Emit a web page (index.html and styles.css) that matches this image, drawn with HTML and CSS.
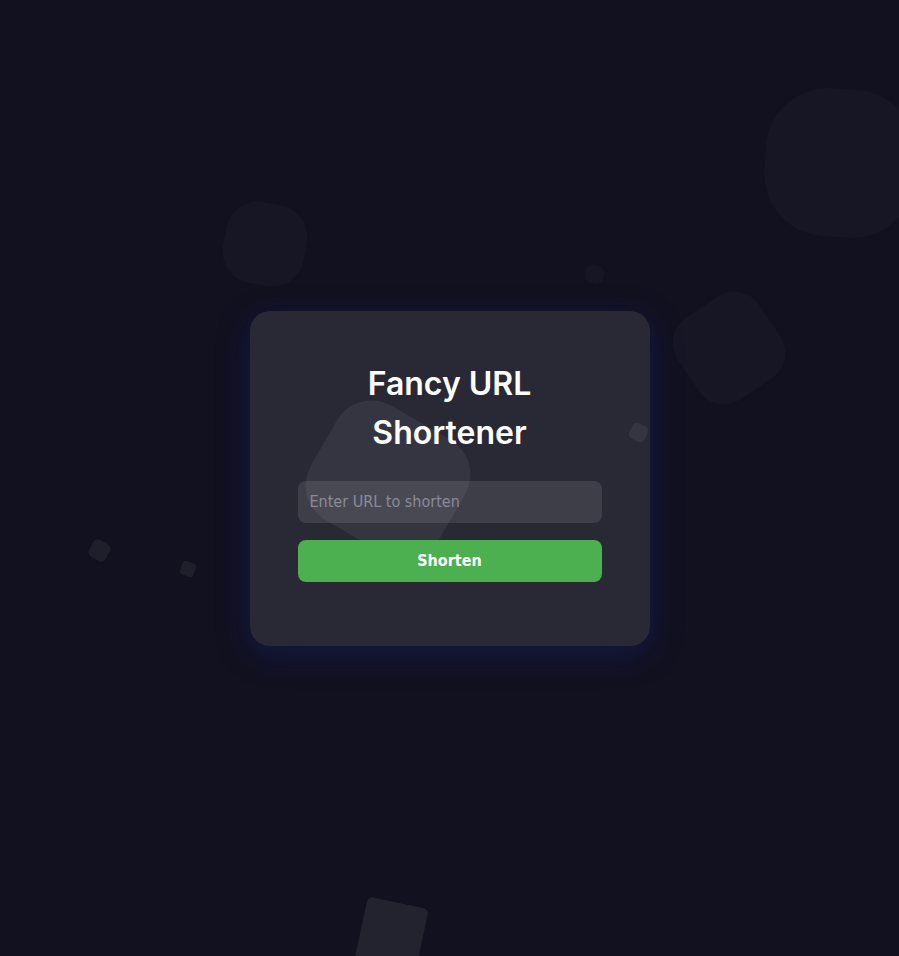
FILE: index.html
```html
<!DOCTYPE html>
<html lang="en">
<head>
<meta charset="utf-8">
<title>Fancy URL Shortener</title>
<link rel="stylesheet" href="styles.css">
</head>
<body>
<div class="shapes">
  <span class="shape s1"></span>
  <span class="shape s2"></span>
  <span class="shape s3"></span>
  <span class="shape s4"></span>
  <span class="shape s5"></span>
  <span class="shape s6"></span>
  <span class="shape s7"></span>
  <span class="shape s8"></span>
  <span class="shape s9"></span>
</div>
<main class="page">
  <section class="card">
    <h1 class="title">Fancy URL Shortener</h1>
    <form class="form">
      <input class="url-input" type="text" placeholder="Enter URL to shorten">
      <button class="btn" type="button">Shorten</button>
    </form>
  </section>
</main>
</body>
</html>
```

FILE: styles.css
```css
html, body {
  margin: 0;
  padding: 0;
  height: 100%;
}
body {
  background: #11111f;
  font-family: "DejaVu Sans Condensed", "DejaVu Sans", sans-serif;
  overflow: hidden;
  position: relative;
}
.shapes {
  position: absolute;
  inset: 0;
  z-index: 0;
}
.shape {
  position: absolute;
  display: block;
  background: rgba(255, 255, 255, 0.025);
}
.s1 { left: 224px; top: 203px; width: 82px; height: 82px; border-radius: 32px; transform: rotate(10deg); }
.s2 { left: 765px; top: 89px; width: 150px; height: 148px; border-radius: 62px; transform: rotate(4deg); }
.s3 { left: 680px; top: 299px; width: 98px; height: 98px; border-radius: 30px; transform: rotate(-34deg); }
.s4 { left: 585px; top: 265px; width: 19px; height: 19px; border-radius: 8px; transform: rotate(20deg); }
.s5 { left: 630px; top: 424px; width: 17px; height: 17px; border-radius: 5px; transform: rotate(25deg); background: rgba(255,255,255,0.06); }
.s6 { left: 90px; top: 541px; width: 19px; height: 19px; border-radius: 5px; transform: rotate(30deg); background: rgba(255,255,255,0.06); }
.s7 { left: 181px; top: 562px; width: 14px; height: 14px; border-radius: 3px; transform: rotate(20deg); background: rgba(255,255,255,0.06); }
.s8 { left: 314px; top: 414px; width: 148px; height: 132px; border-radius: 40px; transform: rotate(30deg); background: rgba(255,255,255,0.06); }
.s9 { left: 359px; top: 902px; width: 62px; height: 80px; border-radius: 5px; transform: rotate(12deg); background: rgba(255,255,255,0.08); }

.page {
  position: relative;
  z-index: 1;
  height: 100%;
  display: flex;
  align-items: center;
  justify-content: center;
}
.card {
  width: 304px;
  padding: 48px 48px 64px;
  background: rgba(255, 255, 255, 0.1);
  border-radius: 20px;
  box-shadow: 0 8px 32px 0 rgba(31, 38, 135, 0.37);
  text-align: center;
}
.title {
  margin: 0 0 24px;
  color: #ffffff;
  font-family: "Inter", "Open Sans", sans-serif;
  font-weight: 600;
  font-size: 32px;
  line-height: 49px;
  padding: 0 24px;
}
.form {
  display: flex;
  flex-direction: column;
  gap: 17px;
}
.url-input {
  box-sizing: border-box;
  width: 100%;
  height: 42px;
  border: none;
  outline: none;
  border-radius: 8px;
  padding: 0 12px;
  background: rgba(255, 255, 255, 0.1);
  color: #fff;
  font-family: "DejaVu Sans Condensed", "DejaVu Sans", sans-serif;
  font-size: 16px;
}
.url-input::placeholder {
  color: #8b8b97;
}
.btn {
  height: 42px;
  border: none;
  border-radius: 8px;
  background: #4caf50;
  color: #fff;
  font-family: "DejaVu Sans Condensed", "DejaVu Sans", sans-serif;
  font-weight: bold;
  font-size: 16px;
  cursor: pointer;
}
```
